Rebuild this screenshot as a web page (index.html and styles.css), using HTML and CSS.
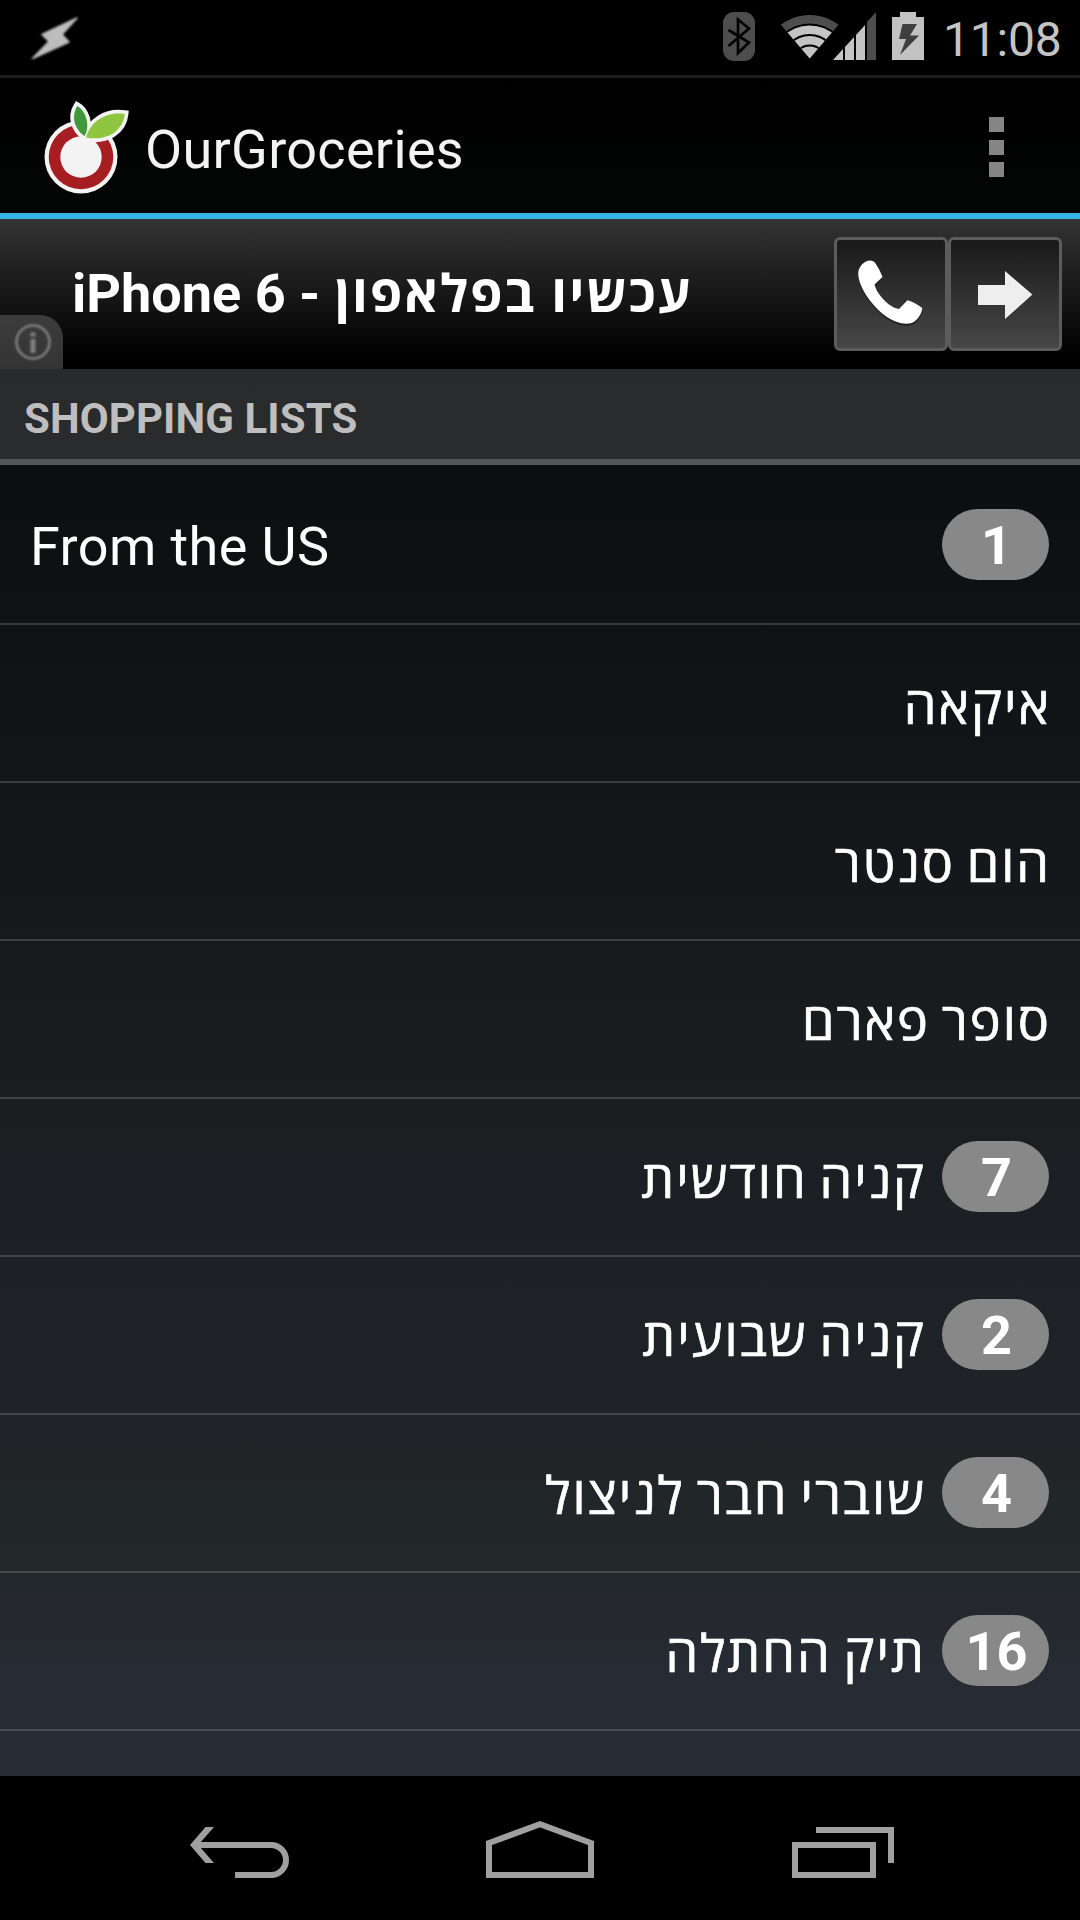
FILE: index.html
```html
<!DOCTYPE html>
<html lang="en">
<head>
<meta charset="utf-8">
<title>OurGroceries</title>
<link rel="stylesheet" href="styles.css">
</head>
<body>
<div class="screen">
  <div class="statusbar">
    <svg class="status-bolt" width="54" height="50" viewBox="28 14 54 50"><path d="M77 18L42 34.5l7 7L32.500 58.500 69 42l-7-7.500z" fill="#bdbdbd" stroke="#bdbdbd" stroke-width="1.500" stroke-linejoin="round"/></svg>
    <svg class="status-icons" width="201" height="52" viewBox="723 10 201 52">
      <rect x="723" y="12" width="32" height="49" rx="11" fill="#4d4d4d"/>
      <path d="M728.500 30L749 42.500 738 53V19.500l11 9L728.500 46" fill="none" stroke="#000" stroke-width="2.700"/>
      <clipPath id="wifi-cone"><path d="M809.700 58.500L779 22.500 800 8h20l20.500 14.500z"/></clipPath>
      <g clip-path="url(#wifi-cone)">
        <circle cx="809.700" cy="63" r="48" fill="#4d4d4d"/>
        <circle cx="809.700" cy="63" r="39.500"/>
        <circle cx="809.700" cy="63" r="37.500" fill="#c4c4c4"/>
        <g fill="none" stroke="#000" stroke-width="2.200">
          <circle cx="809.700" cy="62" r="27"/>
          <circle cx="809.700" cy="62" r="16.500"/>
        </g>
      </g>
      <path d="M833 60l10-11v11zM845 60V47l9-10v23zM856 60V35l9-10v35z" fill="#c4c4c4"/>
      <path d="M867 60V22l9-10v48z" fill="#4d4d4d"/>
      <path d="M892 17h8v-5h16v5h8v43h-32z" fill="#c2c2c2"/>
      <path d="M902.500 24H917l-7 11.500h9L900 55l6-16h-7z" fill="#3f3f3f"/>
    </svg>
    <span class="clock">11:08</span>
  </div>

  <div class="actionbar">
    <svg class="logo" width="92" height="100" viewBox="40 98 92 100">
      <circle cx="81" cy="157" r="36.500" fill="#f3f3f3"/>
      <circle cx="81" cy="157" r="32.300" fill="#a61e22"/>
      <circle cx="81" cy="157" r="20.700" fill="#f3f3f3"/>
      <g stroke="#f3f3f3" stroke-width="7.500" fill="#f3f3f3" stroke-miterlimit="3">
        <path d="M77.300 106C85 110 91 125 84.500 136 75 130 70.500 117 77.300 106z"/>
        <path d="M86 137.500C90 122 106 111 124.700 114 123 131 107 141.500 86 137.500z"/>
      </g>
      <path d="M77.300 106C85 110 91 125 84.500 136 75 130 70.500 117 77.300 106z" fill="#41983b"/>
      <path d="M86 137.500C90 122 106 111 124.700 114 123 131 107 141.500 86 137.500z" fill="#8ec73f"/>
    </svg>
    <h1 class="title">OurGroceries</h1>
    <div class="overflow"><i></i><i></i><i></i></div>
  </div>

  <div class="ad">
    <p class="ad-text">iPhone 6 - <span class="ad-he">עכשיו בפלאפון</span></p>
    <div class="ad-buttons">
      <div class="ad-button"><svg width="108" height="108" viewBox="837 240 108 108">
        <path transform="translate(0 2)" fill="#222" d="M866 261.500c4-2 8-.5 9.500 2 3 4 5 9 7 13.500l-8 7.500c2 9 14 23 24.500 24.500l8.500-8.700c5 1.500 10 4 14.700 7.700 0 5-5 13-10.500 15-27 7-62-42-51.500-56 1.300-2.500 3.500-4.500 5.800-5.500z"/>
        <path fill="#fff" d="M866 261.500c4-2 8-.5 9.500 2 3 4 5 9 7 13.500l-8 7.500c2 9 14 23 24.500 24.500l8.500-8.700c5 1.500 10 4 14.700 7.700 0 5-5 13-10.500 15-27 7-62-42-51.500-56 1.300-2.500 3.500-4.500 5.800-5.500z"/></svg></div>
      <div class="ad-button"><svg width="108" height="108" viewBox="951 240 108 108"><path fill="#eee" d="M978 285h27v-14l27.400 23.500L1005 319v-14h-27z"/></svg></div>
    </div>
    <div class="ad-info"><svg width="38" height="38" viewBox="0 0 38 38"><circle cx="19" cy="19" r="16.500" fill="none" stroke="#808080" stroke-width="2.600"/><path d="M16.500 9.500h5v4h-5zM16.500 16h5v14h-5z" fill="#808080"/></svg></div>
  </div>

  <h2 class="section">SHOPPING LISTS</h2>

  <ul class="lists">
    <li class="row"><span class="name">From the US</span><b class="badge">1</b></li>
    <li class="row"><span class="name" dir="rtl">איקאה</span></li>
    <li class="row"><span class="name" dir="rtl">הום סנטר</span></li>
    <li class="row"><span class="name" dir="rtl">סופר פארם</span></li>
    <li class="row"><span class="name" dir="rtl">קניה חודשית</span><b class="badge">7</b></li>
    <li class="row"><span class="name" dir="rtl">קניה שבועית</span><b class="badge">2</b></li>
    <li class="row"><span class="name" dir="rtl">שוברי חבר לניצול</span><b class="badge">4</b></li>
    <li class="row"><span class="name" dir="rtl">תיק החתלה</span><b class="badge">16</b></li>
  </ul>

  <div class="navbar">
    <svg width="100" height="58" viewBox="190 1820 100 58"><path d="M198 1845h73a15 15 0 0 1 0 30h-36" fill="none" stroke="#a0a0a0" stroke-width="6"/><path d="M190 1845l15.500-18h8.500l-14 16v4l14 16h-8.500z" fill="#a0a0a0"/></svg>
    <svg class="home" width="108" height="58" viewBox="486 1820 108 58"><path d="M489 1843l51-18.700 51 18.700v32H489z" fill="none" stroke="#a0a0a0" stroke-width="6"/></svg>
    <svg class="recents" width="102" height="58" viewBox="792 1820 102 58"><path d="M795 1845h78v30h-78zM816 1830h75v33" fill="none" stroke="#a0a0a0" stroke-width="6"/></svg>
  </div>
</div>
</body>
</html>
```
FILE: styles.css
```css
* { box-sizing: border-box; margin: 0; padding: 0; }
body { background: #000; font-family: Roboto, "Open Sans", sans-serif; color: #fff; }
svg { display: block; flex: none; }

.screen {
  width: 1080px;
  height: 1920px;
  display: flex;
  flex-direction: column;
  overflow: hidden;
  background: linear-gradient(#000 78px, #0c0e0f 465px, #121418 750px, #1a1e20 1090px, #1c1f24 1200px, #22272a 1560px, #262a31 1650px, #282c35 1776px);
}

.statusbar {
  height: 78px;
  display: flex;
  align-items: flex-start;
  background: #000;
  border-bottom: 3px solid #1e1e1e;
}
.status-bolt { margin: 14px 0 0 28px; filter: blur(0.8px); }
.status-icons { margin: 10px 0 0 641px; }
.clock {
  margin-left: 19px;
  font-size: 48px;
  line-height: 80px;
  letter-spacing: -0.2px;
  color: #c4c4c4;
  white-space: nowrap;
}

.actionbar {
  height: 141px;
  display: flex;
  align-items: center;
  padding: 0 76px 0 40px;
  border-bottom: 6px solid #33b5e5;
}
.logo { margin-top: 4px; }
.title {
  flex: 1;
  padding: 8px 0 0 13px;
  font-size: 54px;
  font-weight: 400;
  line-height: 64px;
  letter-spacing: 0.3px;
  color: #f3f3f3;
}
.overflow { display: flex; flex-direction: column; gap: 7.500px; margin-top: 3px; }
.overflow i { width: 15px; height: 15px; background: #858585; }

.ad {
  position: relative;
  height: 150px;
  display: flex;
  align-items: center;
  justify-content: space-between;
  padding: 0 18px 0 72px;
  background: linear-gradient(#333, #000 92%);
}
.ad-text { font-size: 54px; font-weight: 700; line-height: 64px; white-space: nowrap; }
.ad-he { margin-left: 1px; font-size: 52px; letter-spacing: 2px; }
.ad-buttons { display: flex; }
.ad-button {
  width: 114px;
  height: 114px;
  border: 3px solid #5c5c5c;
  border-radius: 6px;
  background: linear-gradient(#191919, #474747);
}
.ad-info {
  position: absolute;
  left: 0;
  bottom: 0;
  width: 63px;
  height: 54px;
  padding: 8px 0 0 14px;
  border-top-right-radius: 23px;
  background: linear-gradient(#3c3c3c, #343434);
}
.ad-info svg { filter: blur(0.8px); }

.section {
  height: 96px;
  padding: 5px 24px 0;
  border-bottom: 6px solid #545554;
  background: linear-gradient(#282a2b, #2a2b2d);
  font-size: 42px;
  font-weight: 700;
  line-height: 90px;
  letter-spacing: 0.1px;
  color: #bebebe;
}

.lists { flex: 1; padding-top: 2px; list-style: none; }
.row {
  height: 158px;
  display: flex;
  align-items: center;
  gap: 16px;
  padding: 0 31px 0 30px;
  border-bottom: 2px solid rgba(255, 255, 255, 0.16);
}
.name { flex: 1; padding-top: 4px; font-size: 54px; line-height: 64px; letter-spacing: 0.4px; }
.name[dir="rtl"] {
  margin-right: -2px;
  padding-top: 8px;
  font-size: 52px;
  letter-spacing: 2px;
  word-spacing: -3px;
  -webkit-text-stroke: 0.7px #fff;
}
.badge {
  width: 107px;
  height: 71px;
  margin-top: -1px;
  padding: 1px 0 0 2px;
  border-radius: 36px;
  background: #888;
  font-size: 54px;
  line-height: 71px;
  text-align: center;
}
.name[dir="rtl"] + .badge { margin-left: 2px; }

.navbar {
  height: 144px;
  display: flex;
  padding: 44px 186px 0 190px;
  background: #000;
}
.home { margin-left: 196px; }
.recents { margin-left: 198px; }
```
